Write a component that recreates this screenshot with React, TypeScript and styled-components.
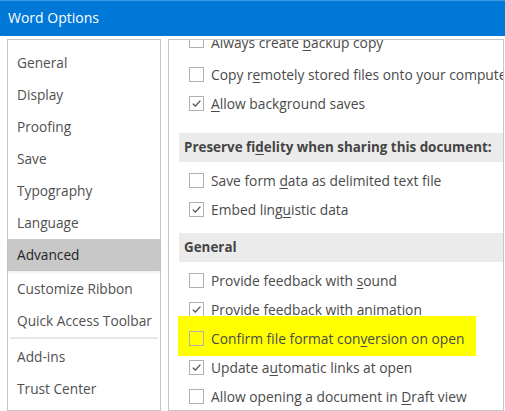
import styled, { createGlobalStyle } from "styled-components";

const GlobalStyle = createGlobalStyle`
  html, body {
    margin: 0;
    padding: 0;
    background: #ffffff;
  }
  body {
    font-family: "Segoe UI", "Open Sans", "Noto Sans", sans-serif;
  }
`;

interface INavItem {
  active?: boolean;
}

interface IOptionRow {
  highlight?: boolean;
}

interface ISection {
  gap: number;
}

const navGroups: { label: string; active?: boolean }[][] = [
  [
    { label: "General" },
    { label: "Display" },
    { label: "Proofing" },
    { label: "Save" },
    { label: "Typography" },
    { label: "Language" },
    { label: "Advanced", active: true },
    { label: "Customize Ribbon" },
    { label: "Quick Access Toolbar" },
  ],
  [{ label: "Add-ins" }, { label: "Trust Center" }],
];

// [before, accessKey, after]
type Label = [string, string, string];

interface IOption {
  label: Label;
  checked: boolean;
  highlight?: boolean;
}

interface IGroup {
  title?: Label;
  gap: number;
  options: IOption[];
}

const groups: IGroup[] = [
  {
    gap: 0,
    options: [
      { label: ["Always create ", "b", "ackup copy"], checked: false },
      { label: ["Copy r", "e", "motely stored files onto your computer"], checked: false },
      { label: ["", "A", "llow background saves"], checked: true },
    ],
  },
  {
    title: ["Preserve fi", "d", "elity when sharing this document:"],
    gap: 15,
    options: [
      { label: ["Save form ", "d", "ata as delimited text file"], checked: false },
      { label: ["Embed ling", "u", "istic data"], checked: true },
    ],
  },
  {
    title: ["", "", "General"],
    gap: 9,
    options: [
      { label: ["Provide feedback with ", "s", "ound"], checked: false },
      { label: ["Provide feedback with ", "a", "nimation"], checked: true },
      { label: ["Confirm file format con", "v", "ersion on open"], checked: false, highlight: true },
      { label: ["Update a", "u", "tomatic links at open"], checked: true },
      { label: ["Allow opening a document in ", "D", "raft view"], checked: false },
    ],
  },
];

const AccessLabel = ({ label }: { label: Label }) => (
  <>
    {label[0]}
    {label[1] && <Key>{label[1]}</Key>}
    {label[2]}
  </>
);

const App = () => {
  return (
    <>
      <GlobalStyle />
      <Window>
        <TitleBar>Word Options</TitleBar>
        <Body>
          <Nav>
            {navGroups.map((group, gi) => (
              <NavGroup key={gi}>
                {group.map((item) => (
                  <NavItem key={item.label} active={item.active}>
                    {item.label}
                  </NavItem>
                ))}
              </NavGroup>
            ))}
          </Nav>
          <Content>
            <Scroller>
              {groups.map((group, gi) => (
                <Section key={gi} gap={group.gap}>
                  {group.title && (
                    <SectionTitle>
                      <AccessLabel label={group.title} />
                    </SectionTitle>
                  )}
                  <OptionList>
                    {group.options.map((opt) => (
                      <OptionRow key={opt.label.join("")} highlight={opt.highlight}>
                        <CheckBox>
                          {opt.checked && (
                            <svg width="11" height="11" viewBox="0 0 11 11">
                              <path
                                d="M1.8 5.6 L4.3 8.1 L9.4 2.6"
                                fill="none"
                                stroke="#4a4a4a"
                                strokeWidth="1.3"
                              />
                            </svg>
                          )}
                        </CheckBox>
                        <OptionText>
                          <AccessLabel label={opt.label} />
                        </OptionText>
                      </OptionRow>
                    ))}
                  </OptionList>
                </Section>
              ))}
            </Scroller>
          </Content>
        </Body>
      </Window>
    </>
  );
};

export default App;

const Window = styled.div`
  width: 505px;
  height: 411px;
  display: flex;
  flex-direction: column;
  background: #ffffff;
  overflow: hidden;
`;

const TitleBar = styled.div`
  height: 36px;
  flex: none;
  box-sizing: border-box;
  padding: 0 0 2px 8px;
  display: flex;
  align-items: center;
  background: #0078d7;
  color: #ffffff;
  font-size: 14px;
  border-top: 1px solid #3d96e0;
`;

const Body = styled.div`
  flex: 1;
  display: flex;
  gap: 7px;
  padding: 3px 1px 0 7px;
  min-height: 0;
`;

const Nav = styled.nav`
  width: 154px;
  flex: none;
  box-sizing: border-box;
  border: 1px solid #c6c6c6;
  padding-top: 7px;
`;

const NavGroup = styled.div`
  & + & {
    padding-top: 2px;
    border-top: 2px solid #e6e6e6;
    margin: 0 2px;
  }
  & + & > * {
    margin: 0 -2px;
  }
`;

const NavItem = styled.div<INavItem>`
  height: 32px;
  line-height: 32px;
  padding-left: 9px;
  font-size: 13.7px;
  color: ${(props) => (props.active ? "#262626" : "#505050")};
  background: ${(props) => (props.active ? "#c8c8c8" : "transparent")};
  margin-bottom: ${(props) => (props.active ? "2px" : "0")};
  box-shadow: ${(props) =>
    props.active ? "0 2px 2px rgba(0, 0, 0, 0.06)" : "none"};
  white-space: nowrap;
`;

const Content = styled.div`
  flex: 1;
  box-sizing: border-box;
  border: 1px solid #c6c6c6;
  overflow: hidden;
`;

const Scroller = styled.div`
  margin-top: -10px;
`;

const Section = styled.section<ISection>`
  margin-top: ${(props) => props.gap}px;
`;

const SectionTitle = styled.div`
  height: 29px;
  line-height: 29px;
  margin-left: 10px;
  padding-left: 5px;
  background: #ebebeb;
  color: #444444;
  font-size: 13.4px;
  font-weight: bold;
  white-space: nowrap;
  overflow: hidden;
`;

const OptionList = styled.div`
  ${SectionTitle} + & {
    margin-top: 4px;
  }
`;

const OptionRow = styled.div<IOptionRow>`
  position: relative;
  box-sizing: border-box;
  height: 29px;
  display: flex;
  align-items: center;
  gap: 7px;
  padding-left: 20px;
  white-space: nowrap;

  /* the top row sits half scrolled out of view */
  ${Section}:first-child &:first-child {
    height: 30px;
    align-items: flex-start;
    padding-top: 3px;
  }

  &::before {
    content: "";
    display: ${(props) => (props.highlight ? "block" : "none")};
    position: absolute;
    top: -8px;
    bottom: -3px;
    left: 9px;
    width: 298px;
    background: #ffff00;
  }
`;

const CheckBox = styled.span`
  position: relative;
  width: 15px;
  height: 15px;
  flex: none;
  box-sizing: border-box;
  border: 1px solid #b0b0b0;
  display: flex;
  align-items: center;
  justify-content: center;
`;

const OptionText = styled.span`
  position: relative;
  font-size: 13.8px;
  color: #4a4a4a;
`;

const Key = styled.span`
  text-decoration: underline;
  text-underline-offset: 2px;
`;
